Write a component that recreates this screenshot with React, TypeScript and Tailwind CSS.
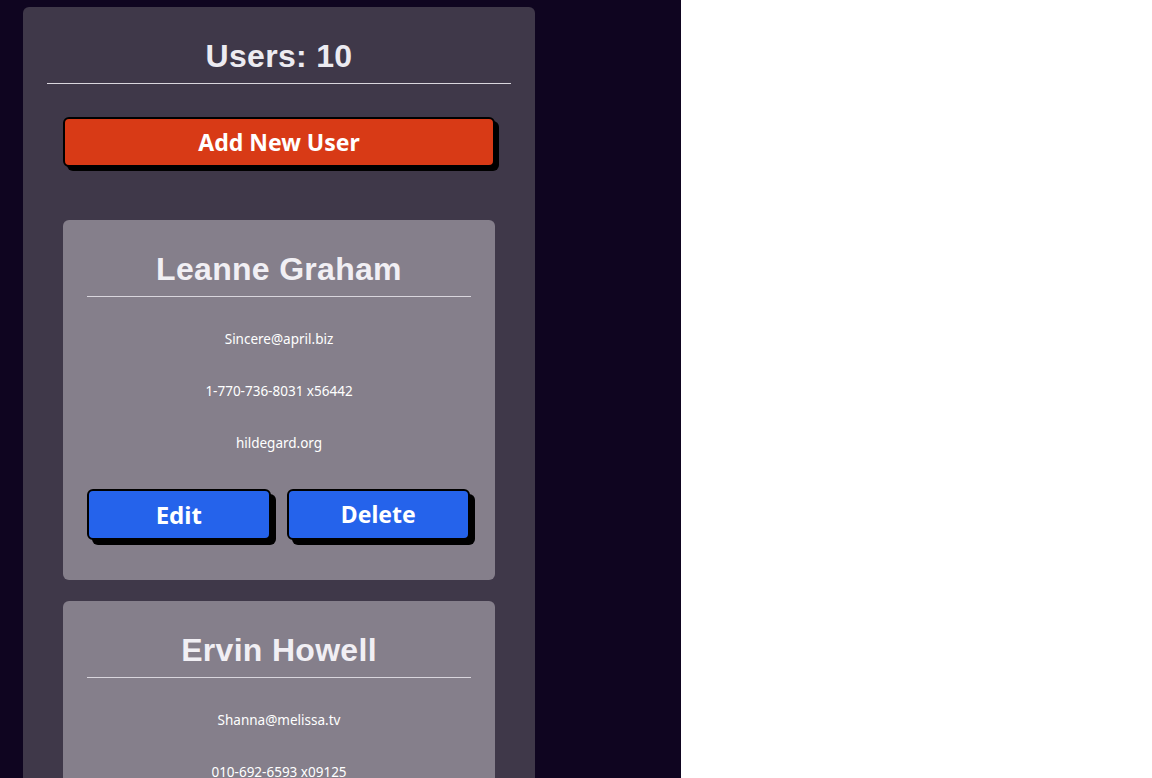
import React from "react";

type User = {
    id: number;
    name: string;
    email: string;
    phone: string;
    website: string;
};

const users: User[] = [
    { id: 1, name: "Leanne Graham", email: "Sincere@april.biz", phone: "1-770-736-8031 x56442", website: "hildegard.org" },
    { id: 2, name: "Ervin Howell", email: "Shanna@melissa.tv", phone: "010-692-6593 x09125", website: "anastasia.net" },
    { id: 3, name: "Clementine Bauch", email: "Nathan@yesenia.net", phone: "1-463-123-4447", website: "ramiro.info" },
    { id: 4, name: "Patricia Lebsack", email: "Julianne.OConner@kory.org", phone: "493-170-9623 x156", website: "kale.biz" },
];

const headingFont = { fontFamily: '"Liberation Sans", Arial, sans-serif' };
const bodyFont = { fontFamily: '"Noto Sans", "Open Sans", sans-serif' };

const UserCard: React.FC<{ user: User }> = ({ user }) => {
    return (
        <div className="mx-4 mb-[21px] rounded-md bg-[#857f8b] px-6 pt-[30px] pb-[40px]">
            {/* name */}
            <h2
                style={headingFont}
                className="border-b border-[#d9d6dd] pb-[8px] text-center text-[32px] leading-[38px] font-bold tracking-[0.3px] text-[#f1eff4]"
            >
                {user.name}
            </h2>
            {/* info */}
            <div style={bodyFont} className="mt-[32px] flex flex-col gap-[32px] text-center text-[13.5px] leading-[20px] text-white">
                <p>{user.email}</p>
                <p>{user.phone}</p>
                <p>{user.website}</p>
            </div>
            {/* actions */}
            <div className="mt-[36px] flex gap-4 pr-[1px]">
                <button
                    style={bodyFont}
                    className="h-[51px] flex-1 rounded-md border-2 border-black bg-[#2563eb] text-[24px] font-bold text-white shadow-[5px_5px_0_#000]"
                >
                    Edit
                </button>
                <button
                    style={bodyFont}
                    className="h-[51px] flex-1 rounded-md border-2 border-black bg-[#2563eb] text-[23px] font-bold text-white shadow-[5px_5px_0_#000]"
                >
                    Delete
                </button>
            </div>
        </div>
    );
};

export default function App() {
    return (
        <div className="flex h-screen overflow-hidden bg-white">
            <div className="w-[681px] shrink-0 bg-[#0f0520] pt-[7px] pl-[23px]">
                <div className="w-[512px] rounded-md bg-[#3f3849] pt-[30px]">
                    {/* header */}
                    <div className="px-6">
                        <h1
                            style={headingFont}
                            className="border-b border-[#d9d6dd] pb-[8px] text-center text-[32px] leading-[38px] font-bold tracking-[0.3px] text-[#ecebf1]"
                        >
                            Users: 10
                        </h1>
                    </div>
                    <div className="px-6 pt-[33px] pb-[53px]">
                        <button
                            style={bodyFont}
                            className="h-[50px] w-[432px] mx-4 rounded-md border-2 border-black bg-[#d83a16] text-[23px] font-bold text-white shadow-[4px_4px_0_#000]"
                        >
                            Add New User
                        </button>
                    </div>
                    <div className="px-6">
                        {users.map((u) => (
                            <UserCard key={u.id} user={u} />
                        ))}
                    </div>
                </div>
            </div>
        </div>
    );
}
